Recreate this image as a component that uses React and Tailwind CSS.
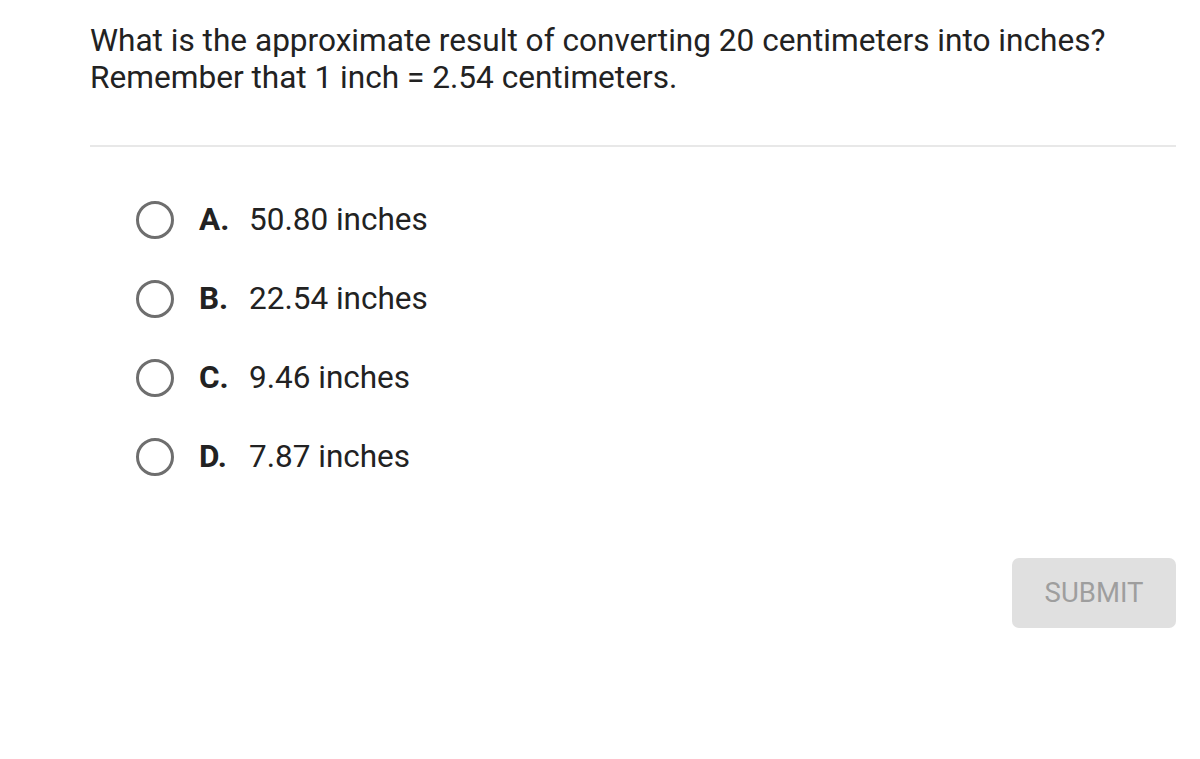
const options = [
  { letter: 'A.', text: '50.80 inches' },
  { letter: 'B.', text: '22.54 inches' },
  { letter: 'C.', text: '9.46 inches' },
  { letter: 'D.', text: '7.87 inches' },
];

const App = () => {
  return (
    <div className="w-[1200px] h-[759px] bg-white pl-[90px] pr-[24px] pt-[22px]" style={{ fontFamily: 'Roboto, "Liberation Sans", sans-serif' }}>
      <p className="text-[31.6px] leading-[37px] text-[#222]">
        What is the approximate result of converting 20 centimeters into inches?
        <br />
        Remember that 1 inch = 2.54 centimeters.
      </p>
      <div className="mt-[49px] h-[2px] bg-[#e8e8e8]" />
      <div className="pl-[46px] pt-[54px] flex flex-col gap-[42px]">
        {options.map((o) => (
          <div key={o.letter} className="flex items-center h-[37px]">
            <span className="w-[38px] h-[38px] rounded-full border-[3px] border-[#6e6e6e]" />
            <span className="ml-[25px] w-[50px] text-[31.5px] font-bold text-[#222]">{o.letter}</span>
            <span className="text-[31.5px] text-[#222]">{o.text}</span>
          </div>
        ))}
      </div>
      <div className="flex justify-end mt-[83px]">
        <button className="w-[164px] h-[70px] rounded-[7px] bg-[#e0e0e0] text-[27.5px] text-[#9e9e9e]">SUBMIT</button>
      </div>
    </div>
  );
};

export default App;
